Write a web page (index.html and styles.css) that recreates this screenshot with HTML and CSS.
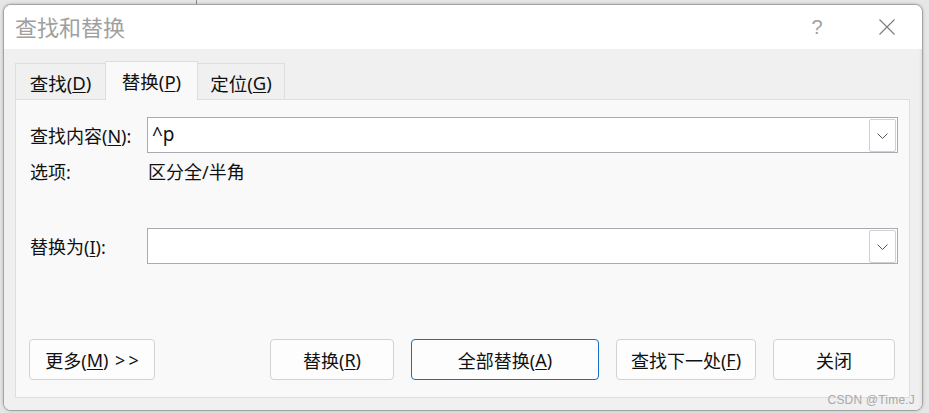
FILE: index.html
```html
<!DOCTYPE html>
<html lang="zh-CN">
<head>
<meta charset="utf-8">
<title>查找和替换</title>
<link rel="stylesheet" href="styles.css">
</head>
<body>
<div class="bg-line"></div>
<div class="window">
  <div class="titlebar">
    <div class="title">查找和替换</div>
    <div class="tb-btn help">?</div>
    <div class="tb-btn close">
      <svg width="16" height="16" viewBox="0 0 16 16"><path d="M0.5 0.5 L15.5 15.5 M15.5 0.5 L0.5 15.5" stroke="#7a7a7a" stroke-width="1.1" fill="none"/></svg>
    </div>
  </div>
  <div class="client">
    <div class="tabs">
      <div class="tab first">查找(<u>D</u>)</div>
      <div class="tab active">替换(<u>P</u>)</div>
      <div class="tab last">定位(<u>G</u>)</div>
    </div>
    <div class="panel">
      <div class="field-row">
        <div class="label">查找内容(<u>N</u>):</div>
        <div class="combo">
          <span class="combo-text">^p</span>
          <span class="drop"><svg width="11" height="6" viewBox="0 0 11 6"><path d="M0.5 0.5 L5.5 5.5 L10.5 0.5" stroke="#555" stroke-width="1" fill="none"/></svg></span>
        </div>
      </div>
      <div class="opt-row">
        <div class="label">选项:</div>
        <div class="opt">区分全/半角</div>
      </div>
      <div class="field-row replace-row">
        <div class="label">替换为(<u>I</u>):</div>
        <div class="combo">
          <span class="combo-text"></span>
          <span class="drop"><svg width="11" height="6" viewBox="0 0 11 6"><path d="M0.5 0.5 L5.5 5.5 L10.5 0.5" stroke="#555" stroke-width="1" fill="none"/></svg></span>
        </div>
      </div>
      <div class="btn-row">
        <div class="btn more">更多(<u>M</u>)&nbsp;<span class="arrows">&gt;&gt;</span></div>
        <div class="btn-group">
          <div class="btn w-replace">替换(<u>R</u>)</div>
          <div class="btn primary w-all">全部替换(<u>A</u>)</div>
          <div class="btn w-next">查找下一处(<u>F</u>)</div>
          <div class="btn w-close">关闭</div>
        </div>
      </div>
    </div>
  </div>
  <div class="watermark">CSDN @Time.J</div>
</div>
</body>
</html>
```
FILE: styles.css
```css
* { box-sizing: border-box; }
html, body { margin: 0; padding: 0; }
body {
  width: 929px;
  height: 413px;
  background: #e6e6e6;
  overflow: hidden;
  position: relative;
  font-family: "Noto Sans", "Noto Sans CJK SC", sans-serif;
  color: #111;
}
.bg-line {
  position: absolute;
  left: 196px;
  top: 0;
  width: 1px;
  height: 5px;
  background: #8a8a8a;
}
.window {
  position: relative;
  margin: 4px 0 0 3px;
  width: 920px;
  height: 407px;
  border: 1px solid #a4a4a4;
  border-radius: 8px;
  overflow: hidden;
  display: flex;
  flex-direction: column;
  background: #f0f0f0;
  box-shadow: 0 0 3px rgba(0,0,0,0.25);
}
.titlebar {
  height: 44px;
  background: #ffffff;
  display: flex;
  align-items: center;
  padding: 0 12px 0 11px;
}
.title {
  font-size: 22px;
  color: #a0a0a0;
  flex: 1;
  line-height: 44px;
}
.tb-btn {
  width: 46px;
  height: 44px;
  display: flex;
  align-items: center;
  justify-content: center;
}
.help {
  font-family: "Liberation Sans", sans-serif;
  font-size: 20px;
  color: #a0a0a0;
  margin-right: 24px;
}
.client {
  flex: 1;
  padding: 12px 12px 12px 11px;
  display: flex;
  flex-direction: column;
  background: linear-gradient(to right, #f0f0f0 0, #f0f0f0 calc(100% - 4px), #e6e6e6 100%);
}
.tabs {
  display: flex;
  align-items: flex-end;
  height: 39px;
  margin-bottom: -1px;
}
.tab {
  height: 37px;
  border: 1px solid #dedede;
  border-bottom: none;
  background: #f0f0f0;
  font-size: 18.5px;
  display: flex;
  align-items: center;
  justify-content: center;
  padding-top: 1px;
}
.tab.first { width: 90px; border-right: none; }
.tab.active {
  width: 93px;
  height: 39px;
  background: #f9f9f9;
  position: relative;
  z-index: 1;
  padding-top: 0;
}
.tab.last { width: 87px; border-left: none; }
.panel {
  height: 299px;
  border: 1px solid #dedede;
  background: #f9f9f9;
  padding: 17px 11px 17px 14px;
  display: flex;
  flex-direction: column;
}
.field-row {
  display: flex;
  align-items: center;
  height: 36px;
}
.label {
  width: 117px;
  font-size: 18px;
  flex: none;
}
.combo {
  flex: 1;
  height: 36px;
  background: #ffffff;
  border: 1px solid #aaaab2;
  display: flex;
}
.combo-text {
  padding-left: 4px;
  font-size: 19px;
  line-height: 32px;
  flex: 1;
}
.drop {
  width: 27px;
  height: 33px;
  margin: 1px 1px 0 0;
  border: 1px solid #d0d0d0;
  border-radius: 2px;
  display: flex;
  align-items: center;
  justify-content: center;
}
.opt-row {
  display: flex;
  margin-top: 7px;
  height: 24px;
  line-height: 24px;
  font-size: 18px;
}
.opt { padding-left: 1px; }
.replace-row { margin-top: 44px; }
.btn-row {
  margin-top: auto;
  display: flex;
  height: 41px;
  margin-left: -1px;
  margin-right: 3px;
}
.btn-group {
  margin-left: auto;
  display: flex;
  gap: 17px;
}
.btn {
  height: 41px;
  background: #fdfdfd;
  border: 1px solid #d2d2d2;
  border-radius: 4px;
  font-size: 18px;
  display: flex;
  align-items: center;
  justify-content: center;
}
.arrows { letter-spacing: 3px; margin-left: 2px; }
.btn.primary { border-color: #1570c4; }
.more { width: 126px; padding-left: 3px; }
.w-replace { width: 124px; }
.w-all { width: 188px; }
.w-next { width: 140px; }
.w-close { width: 122px; }
u { text-underline-offset: 2px; text-decoration-thickness: 1px; }
.watermark {
  position: absolute;
  right: 7px;
  bottom: 3px;
  font-family: "Liberation Sans", sans-serif;
  font-size: 12px;
  color: #a9a9a9;
  letter-spacing: 0.2px;
}
```
